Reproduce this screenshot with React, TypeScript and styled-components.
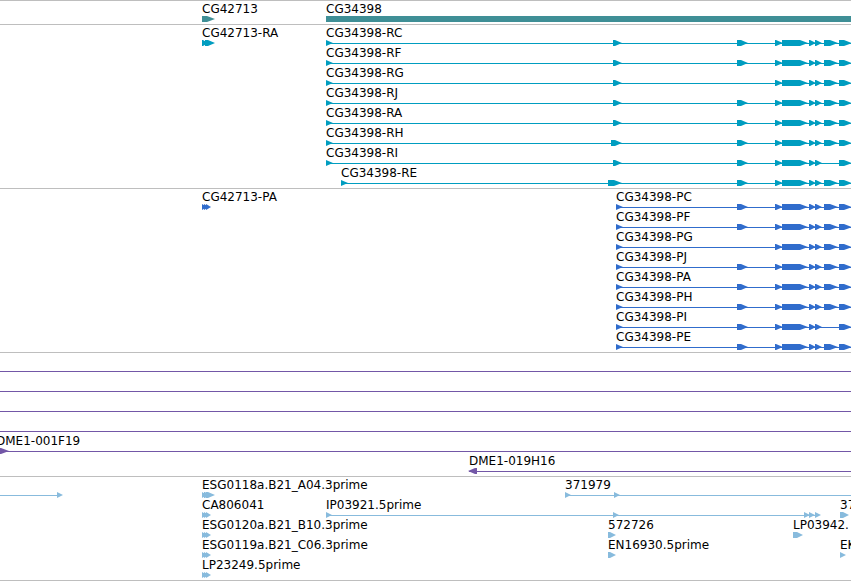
import React from 'react';
import styled, { createGlobalStyle } from 'styled-components';

type Exon = [start: number, end: number, head: number];

interface Feature {
  name?: string;
  start: number;
  line?: [number, number];
  exons?: Exon[];
  reverse?: boolean;
}

interface TrackData {
  id: string;
  color: string;
  rows: Feature[][];
}

const OPEN_END = 4000;

const GlobalStyle = createGlobalStyle`
  * {
    box-sizing: border-box;
  }
  body {
    margin: 0;
    background: #ffffff;
  }
`;

const Browser = styled.main`
  width: 100%;
  overflow: hidden;
  border-bottom: 1px solid #bebebe;
  color: #000000;
  font-family: 'DejaVu Sans', Verdana, sans-serif;
  font-size: 12px;
  line-height: 14px;
`;

const Track = styled.section<{ $color: string }>`
  display: flex;
  flex-direction: column;
  padding: 1px 0 2px;
  border-top: 1px solid #bebebe;
  fill: ${({ $color }) => $color};
`;

const Row = styled.div`
  position: relative;
  display: flex;
  flex-direction: column;
  justify-content: flex-end;
  height: 20px;
`;

const Glyphs = styled.svg`
  display: block;
  width: 100%;
  height: 6px;
  overflow: visible;
`;

const Label = styled.span<{ $start: number }>`
  position: absolute;
  top: 0;
  left: ${({ $start }) => $start}px;
  white-space: nowrap;
`;

const coding: Exon[] = [
  [775, 783, 7],
  [782, 808, 8],
  [809, 816, 6],
  [815, 822, 6],
  [824, 838, 8],
  [839, 852, 8],
];
const singleExon: Exon = [737, 748, 7];
const codingShort = coding.filter(([start]) => start !== 824);

const model = (name: string, start: number, extra: Exon[], body: Exon[] = coding): Feature[] => [
  {
    name,
    start,
    line: [start, OPEN_END],
    exons: [[start, start + 7, 7], ...extra, ...body],
  },
];

const span = (): Feature[] => [{ start: 0, line: [0, OPEN_END] }];
const threeStep = (start: number): Exon[] => [
  [start, start + 5, 5],
  [start + 2, start + 7, 5],
  [start + 4, start + 9, 5],
];
const utr: Exon = [613, 622, 7];

const tracks: TrackData[] = [
  {
    id: 'genes',
    color: '#3f8f96',
    rows: [
      [
        { name: 'CG42713', start: 202, exons: [[202, 215, 8]] },
        { name: 'CG34398', start: 326, exons: [[326, OPEN_END, 8]] },
      ],
    ],
  },
  {
    id: 'transcripts',
    color: '#009dc0',
    rows: [
      [
        { name: 'CG42713-RA', start: 202, exons: [[202, 208, 5], [205, 215, 7]] },
        ...model('CG34398-RC', 326, [utr, singleExon]),
      ],
      model('CG34398-RF', 326, [utr, singleExon]),
      model('CG34398-RG', 326, [utr]),
      model('CG34398-RJ', 326, [utr, singleExon]),
      model('CG34398-RA', 326, [utr, singleExon]),
      model('CG34398-RH', 326, [[611, 622, 7], singleExon]),
      model('CG34398-RI', 326, [utr, singleExon], codingShort),
      model('CG34398-RE', 341, [[608, 622, 8], singleExon]),
    ],
  },
  {
    id: 'proteins',
    color: '#306ccc',
    rows: [
      [{ name: 'CG42713-PA', start: 202, exons: threeStep(202) }, ...model('CG34398-PC', 616, [singleExon])],
      model('CG34398-PF', 616, [singleExon]),
      model('CG34398-PG', 616, []),
      model('CG34398-PJ', 616, [singleExon]),
      model('CG34398-PA', 616, [singleExon]),
      model('CG34398-PH', 616, [singleExon]),
      model('CG34398-PI', 616, [singleExon], codingShort),
      model('CG34398-PE', 616, [singleExon]),
    ],
  },
  {
    id: 'clones',
    color: '#7357a7',
    rows: [
      span(),
      span(),
      span(),
      span(),
      [{ name: 'DME1-001F19', start: -4, line: [0, OPEN_END], exons: [[-4, 9, 8]] }],
      [{ name: 'DME1-019H16', start: 469, line: [469, OPEN_END], exons: [[468, 477, 7]], reverse: true }],
    ],
  },
  {
    id: 'ests',
    color: '#88bbdd',
    rows: [
      [
        { start: 0, line: [0, 60], exons: [[57, 63, 6]] },
        { name: 'ESG0118a.B21_A04.3prime', start: 202, exons: [[202, 207, 5], [204, 209, 4], [206, 215, 7]] },
        { name: '371979', start: 565, line: [565, OPEN_END], exons: [[565, 571, 6], [614, 620, 6]] },
      ],
      [
        { name: 'CA806041', start: 202, exons: threeStep(202) },
        {
          name: 'IP03921.5prime',
          start: 326,
          line: [326, 818],
          exons: [[326, 332, 6], [613, 619, 6], [804, 810, 6], [809, 815, 6], [815, 821, 6]],
        },
        { name: '37', start: 840, exons: [[840, 849, 6]] },
      ],
      [
        { name: 'ESG0120a.B21_B10.3prime', start: 202, exons: threeStep(202) },
        { name: '572726', start: 608, exons: [[608, 616, 6]] },
        { name: 'LP03942.', start: 793, exons: [[793, 803, 6]] },
      ],
      [
        { name: 'ESG0119a.B21_C06.3prime', start: 202, exons: threeStep(202) },
        { name: 'EN16930.5prime', start: 608, exons: [[608, 616, 6]] },
        { name: 'EK', start: 840, exons: [[840, 846, 6]] },
      ],
      [{ name: 'LP23249.5prime', start: 202, exons: threeStep(202) }],
    ],
  },
];

function arrow([start, end, head]: Exon, reverse?: boolean) {
  return reverse
    ? `M${end} 0H${start + head}L${start} 3L${start + head} 6H${end}Z`
    : `M${start} 0H${end - head}L${end} 3L${end - head} 6H${start}Z`;
}

function FeatureGlyph({ line, exons = [], reverse }: Feature) {
  return (
    <g>
      {line && <rect x={line[0]} y={3} width={line[1] - line[0]} height={1} />}
      {exons.map((exon, i) => (
        <path key={i} d={arrow(exon, reverse)} />
      ))}
    </g>
  );
}

export default function App() {
  return (
    <>
      <GlobalStyle />
      <Browser>
        {tracks.map((track) => (
          <Track key={track.id} $color={track.color} aria-label={track.id}>
            {track.rows.map((features, row) => (
              <Row key={row}>
                {features.map(
                  (f) =>
                    f.name && (
                      <Label key={f.start} $start={f.start}>
                        {f.name}
                      </Label>
                    ),
                )}
                <Glyphs aria-hidden="true">
                  {features.map((f) => (
                    <FeatureGlyph key={f.start} {...f} />
                  ))}
                </Glyphs>
              </Row>
            ))}
          </Track>
        ))}
      </Browser>
    </>
  );
}
